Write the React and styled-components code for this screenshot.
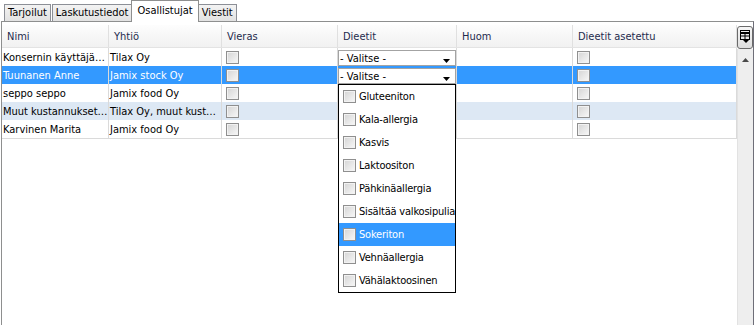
import React from 'react'
import styled, { createGlobalStyle, css } from 'styled-components'

const GlobalStyle = createGlobalStyle`
	html, body {
		margin: 0;
		padding: 0;
		background: #fff;
	}
	body {
		font-family: "DejaVu Sans Condensed", "DejaVu Sans", sans-serif;
		font-stretch: condensed;
		font-size: 11px;
		color: #000;
	}
	* {
		box-sizing: border-box;
	}
`

const COLUMNS = '107px 113px 116px 119px 116px 164px'

const Screen = styled.div`
	width: 756px;
	height: 325px;
	overflow: hidden;
	display: flex;
	flex-direction: column;
	background: #fff;
`

const TabBar = styled.div`
	display: flex;
	align-items: flex-end;
	height: 21px;
	padding-left: 4px;
	gap: 1px;
	position: relative;
	z-index: 2;
`

const Tab = styled.div`
	height: 17px;
	padding: 0 3px;
	line-height: 16px;
	border: 1px solid #8c8f96;
	border-bottom: none;
	background: linear-gradient(#f3f3f3, #e2e2e2);
	white-space: nowrap;

	${(p) =>
		p.$active &&
		css`
			height: 22px;
			line-height: 19px;
			margin: 0 -2px -1px;
			padding: 0 5px;
			background: #fff;
			border-color: #8e8f8f;
			position: relative;
			z-index: 1;
		`}
`

const Panel = styled.div`
	flex: 1;
	display: flex;
	width: 753px;
	margin-left: 1px;
	padding-top: 3px;
	border-top: 1px solid #8e8f8f;
	border-left: 1px solid #8e8f8f;
	border-right: 1px solid #6e6e78;
`

const TableArea = styled.div`
	width: 735px;
	display: flex;
	flex-direction: column;
`

const HeaderRow = styled.div`
	display: grid;
	grid-template-columns: ${COLUMNS};
	height: 23px;
	background: linear-gradient(#fdfdfd, #f1f1f1);
	border-bottom: 1px solid #e3e3e3;
`

const HeaderCell = styled.div`
	display: flex;
	align-items: center;
	padding-left: 5px;
	border-right: 1px solid #e0e0e0;
	color: #1e2b4d;
	white-space: nowrap;
	overflow: hidden;
`

const Row = styled.div`
	display: grid;
	grid-template-columns: ${COLUMNS};
	height: 18px;
	background: ${(p) => (p.$selected ? '#3399ff' : p.$alt ? '#dde8f4' : '#fff')};
	color: ${(p) => (p.$selected ? '#fff' : '#000')};
`

const Cell = styled.div`
	display: flex;
	align-items: center;
	padding-left: 1px;
	border-right: 1px solid #dadada;
	white-space: nowrap;
	overflow: hidden;
	text-overflow: ellipsis;
	position: relative;
`

const CheckCell = styled(Cell)`
	padding-left: 4px;
`

const ComboCell = styled.div`
	border-right: 1px solid #dadada;
	position: relative;
	padding-top: 2px;
`

const TableEnd = styled.div`
	border-top: 1px solid #dadada;
`

const Check = styled.span`
	display: inline-block;
	flex: none;
	width: 13px;
	height: 13px;
	border: 1px solid #8f8f8f;
	background: linear-gradient(135deg, #d4d4d4 0%, #f8f8f8 100%);
	box-shadow: inset 0 0 0 1px #f2f2f2;
`

const Combo = styled.div`
	height: 16px;
	width: 118px;
	border: 1px solid #a3a3a3;
	background: #fff;
	color: #000;
	display: flex;
	align-items: center;
	padding-left: 1px;
	position: relative;
`

const ComboArrow = styled.svg`
	position: absolute;
	right: 5px;
	bottom: 2px;
`

const Popup = styled.div`
	position: absolute;
	top: 100%;
	left: 0;
	width: 118px;
	border: 1px solid #000;
	background: #fff;
	z-index: 5;
	display: flex;
	flex-direction: column;
`

const PopupItem = styled.div`
	height: 23px;
	display: flex;
	align-items: center;
	gap: 3px;
	padding-left: 4px;
	letter-spacing: -0.2px;
	color: ${(p) => (p.$selected ? '#fff' : '#000')};
	background: ${(p) => (p.$selected ? '#3399ff' : '#fff')};
	white-space: nowrap;
`

const ScrollColumn = styled.div`
	width: 16px;
	display: flex;
	flex-direction: column;
`

const ChooserButton = styled.div`
	height: 23px;
	margin-top: 1px;
	border: 1px solid #6a6a6a;
	border-radius: 3px;
	background: linear-gradient(#f6f6f6, #dedede);
	display: flex;
	justify-content: center;
	padding-top: 2px;
`

const Track = styled.div`
	flex: 1;
	background: #eeeeee;
	border-left: 1px solid #e2e2e2;
	display: flex;
	justify-content: center;
	padding-top: 9px;
`

const ArrowDown = () => (
	<ComboArrow width="7" height="4" viewBox="0 0 7 4">
		<polygon points="0,0 7,0 3.5,4" fill="#000" />
	</ComboArrow>
)

const ChooserIcon = () => (
	<svg width="12" height="15" viewBox="0 0 12 15">
		<rect x="1.5" y="1.5" width="9" height="9" fill="none" stroke="#000" />
		<line x1="1.5" y1="4" x2="10.5" y2="4" stroke="#000" strokeWidth="2" />
		<line x1="6" y1="4" x2="6" y2="10.5" stroke="#000" />
		<line x1="1.5" y1="7" x2="10.5" y2="7" stroke="#000" />
		<polygon points="3,10 11,10 7,14" fill="#000" />
	</svg>
)

const UpArrow = () => (
	<svg width="7" height="4" viewBox="0 0 7 4">
		<polygon points="0,4 7,4 3.5,0" fill="#4a4a4a" />
	</svg>
)

const headers = ['Nimi', 'Yhtiö', 'Vieras', 'Dieetit', 'Huom', 'Dieetit asetettu']

const rows = [
	{ name: 'Konsernin käyttäjä…', company: 'Tilax Oy', combo: true },
	{ name: 'Tuunanen Anne', company: 'Jamix stock Oy', combo: true, open: true },
	{ name: 'seppo seppo', company: 'Jamix food Oy' },
	{ name: 'Muut kustannukset…', company: 'Tilax Oy, muut kust…' },
	{ name: 'Karvinen Marita', company: 'Jamix food Oy' },
]

const diets = [
	'Gluteeniton',
	'Kala-allergia',
	'Kasvis',
	'Laktoositon',
	'Pähkinäallergia',
	'Sisältää valkosipulia',
	'Sokeriton',
	'Vehnäallergia',
	'Vähälaktoosinen',
]

const DietPopup = () => (
	<Popup>
		{diets.map((d) => (
			<PopupItem key={d} $selected={d === 'Sokeriton'}>
				<Check />
				{d}
			</PopupItem>
		))}
	</Popup>
)

const App = () => (
	<Screen>
		<GlobalStyle />
		<TabBar>
			<Tab>Tarjoilut</Tab>
			<Tab>Laskutustiedot</Tab>
			<Tab $active>Osallistujat</Tab>
			<Tab>Viestit</Tab>
		</TabBar>
		<Panel>
			<TableArea>
				<HeaderRow>
					{headers.map((h) => (
						<HeaderCell key={h}>{h}</HeaderCell>
					))}
				</HeaderRow>
				{rows.map((r, i) => (
					<Row key={i} $selected={r.open} $alt={i % 2 === 1}>
						<Cell>{r.name}</Cell>
						<Cell>{r.company}</Cell>
						<CheckCell>
							<Check />
						</CheckCell>
						{r.combo ? (
							<ComboCell>
								<Combo>
									- Valitse -
									<ArrowDown />
								</Combo>
								{r.open && <DietPopup />}
							</ComboCell>
						) : (
							<Cell />
						)}
						<Cell />
						<CheckCell>
							<Check />
						</CheckCell>
					</Row>
				))}
				<TableEnd />
			</TableArea>
			<ScrollColumn>
				<ChooserButton>
					<ChooserIcon />
				</ChooserButton>
				<Track>
					<UpArrow />
				</Track>
			</ScrollColumn>
		</Panel>
	</Screen>
)

export default App
